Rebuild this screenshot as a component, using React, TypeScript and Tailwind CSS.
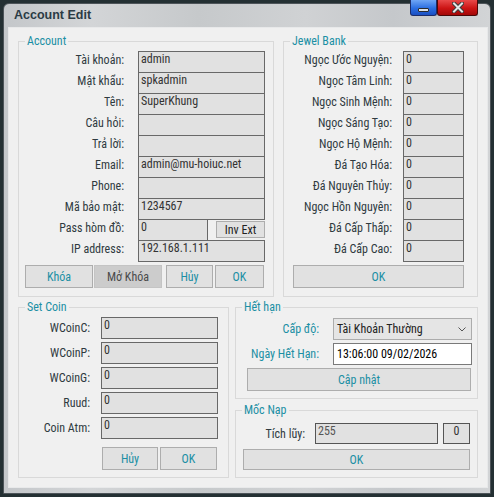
import type { ReactNode } from "react";

const ui = "font-['Roboto_Condensed',Roboto,sans-serif] text-[12px]";

function Group({ title, className = "", children }: { title: string; className?: string; children: ReactNode }) {
  return (
    <fieldset className={`border border-[#d9d9d9] ${className}`}>
      <legend className="ml-[6px] px-[2px] leading-[14px] text-[#1b8fa4]">{title}</legend>
      {children}
    </fieldset>
  );
}

function Box({ value = "", dark = false, className = "" }: { value?: string; dark?: boolean; className?: string }) {
  const tone = dark ? "border-[#555] text-[#555]" : "border-[#686868] text-[#333]";
  return <div className={`border bg-[#e1e1e1] pl-[2px] leading-[14px] ${tone} ${className}`}>{value}</div>;
}

function Btn({ label, pressed = false, className = "" }: { label: string; pressed?: boolean; className?: string }) {
  const tone = pressed ? "border-[#c4c4c4] bg-[#cccccc]" : "border-[#adadad] bg-[#e1e1e1]";
  return <div className={`flex items-center justify-center border ${tone} ${className}`}>{label}</div>;
}

const account: [string, string][] = [
  ["Tài khoản:", "admin"],
  ["Mật khẩu:", "spkadmin"],
  ["Tên:", "SuperKhung"],
  ["Câu hỏi:", ""],
  ["Trả lời:", ""],
  ["Email:", "admin@mu-hoiuc.net"],
  ["Phone:", ""],
  ["Mã bảo mật:", "1234567"],
];

const jewels = [
  "Ngọc Ước Nguyện:",
  "Ngọc Tâm Linh:",
  "Ngọc Sinh Mệnh:",
  "Ngọc Sáng Tạo:",
  "Ngọc Hộ Mệnh:",
  "Đá Tạo Hóa:",
  "Đá Nguyên Thủy:",
  "Ngọc Hồn Nguyên:",
  "Đá Cấp Thấp:",
  "Đá Cấp Cao:",
];

const coins = ["WCoinC:", "WCoinP:", "WCoinG:", "Ruud:", "Coin Atm:"];

export default function App() {
  return (
    <div className={`relative h-[497px] w-[494px] overflow-hidden bg-[#243033] pl-[3px] pt-[3px] ${ui}`}>
      {/* window */}
      <div className="flex h-[491px] w-[488px] flex-col rounded-t-[6px] border border-[#4d5459] bg-[linear-gradient(90deg,#c4c7ca,#d3d5d7_18%,#c6c9cb_40%,#d0d2d4_62%,#c5c8cb_80%,#d2d4d6)]">
        <div className="flex h-[23px] items-center pl-[10px] font-['Liberation_Sans',sans-serif] text-[12.5px] font-bold text-[#2b3b45]">
          Account Edit
        </div>

        <div className="ml-[4px] flex h-[461px] w-[480px] flex-col gap-[3px] border border-[#e8e9ea] bg-[#f0f0f0] px-[9px] pb-[9px] pt-[6px]">
          {/* top row */}
          <div className="flex gap-[9px]">
            <Group title="Account" className="w-[256px]">
              <div className="flex flex-col pt-[3px] text-[#2f3a3f]">
                {account.map(([l, v]) => (
                  <div key={l} className="flex h-[21px]">
                    <div className="w-[105px] pt-[2px] text-right leading-[14px]">{l}</div>
                    <Box value={v} className="ml-[14px] h-[22px] w-[127px]" />
                  </div>
                ))}
                <div className="flex h-[21px]">
                  <div className="w-[105px] pt-[2px] text-right leading-[14px]">Pass hòm đồ:</div>
                  <Box value="0" className="ml-[14px] h-[22px] w-[70px]" />
                  <Btn label="Inv Ext" className="ml-[8px] mt-[2px] h-[17px] w-[49px] text-[#222]" />
                </div>
                <div className="flex h-[21px]">
                  <div className="w-[105px] pt-[2px] text-right leading-[14px]">IP address:</div>
                  <Box value="192.168.1.111" className="ml-[14px] h-[22px] w-[127px]" />
                </div>
                <div className="mt-[4px] flex h-[23px] pl-[6px] text-[#1b8fa4]">
                  <Btn label="Khóa" className="w-[68px]" />
                  <Btn label="Mở Khóa" pressed className="ml-[1px] w-[68px] text-[#4a4a4a]" />
                  <Btn label="Hủy" className="ml-[4px] w-[47px]" />
                  <Btn label="OK" className="ml-[2px] w-[49px]" />
                </div>
                <div className="h-[8px]" />
              </div>
            </Group>

            <Group title="Jewel Bank" className="w-[195px]">
              <div className="flex flex-col pt-[3px] text-[#2f3a3f]">
                {jewels.map((l) => (
                  <div key={l} className="flex h-[21px]">
                    <div className="w-[108px] pt-[2px] text-right leading-[14px]">{l}</div>
                    <Box value="0" className="ml-[11px] h-[22px] w-[61px]" />
                  </div>
                ))}
                <Btn label="OK" className="ml-[9px] mt-[4px] h-[23px] w-[171px] text-[#1b8fa4]" />
                <div className="h-[8px]" />
              </div>
            </Group>
          </div>

          {/* bottom row */}
          <div className="flex gap-[6px]">
            <Group title="Set Coin" className="w-[211px]">
              <div className="flex flex-col gap-[3px] pt-[3px] text-[#2f3a3f]">
                {coins.map((l) => (
                  <div key={l} className="flex h-[22px] items-center">
                    <div className="w-[71px] text-right leading-[14px]">{l}</div>
                    <Box value="0" className="ml-[11px] h-[22px] w-[117px]" />
                  </div>
                ))}
              </div>
              <div className="mt-[8px] flex h-[23px] pl-[83px] text-[#1b8fa4]">
                <Btn label="Hủy" className="w-[56px]" />
                <Btn label="OK" className="ml-[2px] w-[57px]" />
              </div>
              <div className="h-[7px]" />
            </Group>

            <div className="flex flex-col gap-[4px]">
              <Group title="Hết hạn" className="w-[243px]">
                <div className="flex flex-col pt-[4px]">
                  <div className="flex h-[22px] items-center">
                    <div className="w-[83px] text-right text-[#1b8fa4]">Cấp độ:</div>
                    <div className="ml-[14px] flex h-[22px] w-[139px] items-center justify-between border border-[#acacac] bg-[#e5e5e5] pl-[3px] pr-[5px] text-[#222]">
                      <span>Tài Khoản Thường</span>
                      <svg width="8" height="5" viewBox="0 0 8 5" fill="none">
                        <path d="M0.5 0.5 L4 4 L7.5 0.5" stroke="#555" strokeWidth="1" />
                      </svg>
                    </div>
                  </div>
                  <div className="mt-[3px] flex h-[22px] items-center">
                    <div className="w-[83px] text-right text-[#1b8fa4]">Ngày Hết Hạn:</div>
                    <div className="ml-[14px] flex h-[22px] w-[139px] items-center border border-[#7a7a7a] bg-white pl-[3px] text-black">
                      13:06:00 09/02/2026
                    </div>
                  </div>
                  <Btn label="Cập nhật" className="ml-[11px] mt-[3px] h-[23px] w-[224px] text-[#1b8fa4]" />
                  <div className="h-[7px]" />
                </div>
              </Group>

              <Group title="Mốc Nạp" className="w-[243px]">
                <div className="flex flex-col pt-[6px]">
                  <div className="flex h-[21px] items-center">
                    <div className="w-[69px] text-right text-[#2f3a3f]">Tích lũy:</div>
                    <Box value="255" dark className="ml-[10px] h-[21px] w-[123px]" />
                    <div className="ml-[5px] flex h-[21px] w-[27px] items-start justify-center border border-[#555] bg-[#e1e1e1] leading-[14px] text-[#333]">
                      0
                    </div>
                  </div>
                  <Btn label="OK" className="ml-[7px] mt-[5px] h-[21px] w-[227px] text-[#1b8fa4]" />
                  <div className="h-[7px]" />
                </div>
              </Group>
            </div>
          </div>
        </div>
      </div>

      {/* caption buttons */}
      <div className="absolute left-[410px] top-0 flex">
        <div className="flex h-[16px] w-[27px] items-end justify-center rounded-b-[3px] border border-t-0 border-[#1c2d6a] bg-[linear-gradient(180deg,#6fa6f5,#2b6ee0_55%,#1a4fc2)] pb-[3px]">
          <div className="h-[4px] w-[11px] rounded-[1px] border border-[#2b2b2b] bg-[#dde3ea]" />
        </div>
        <div className="flex h-[16px] w-[41px] items-center justify-center rounded-b-[3px] border border-t-0 border-[#4a0808] bg-[linear-gradient(180deg,#e84a4a,#cc1414_55%,#a20808)]">
          <svg width="12" height="11" viewBox="0 0 12 11">
            <path d="M2 1.5 L10 9.5 M10 1.5 L2 9.5" stroke="#3a3a3a" strokeWidth="4" strokeLinecap="square" />
            <path d="M2 1.5 L10 9.5 M10 1.5 L2 9.5" stroke="#e6e6e6" strokeWidth="2" strokeLinecap="square" />
          </svg>
        </div>
      </div>
    </div>
  );
}
